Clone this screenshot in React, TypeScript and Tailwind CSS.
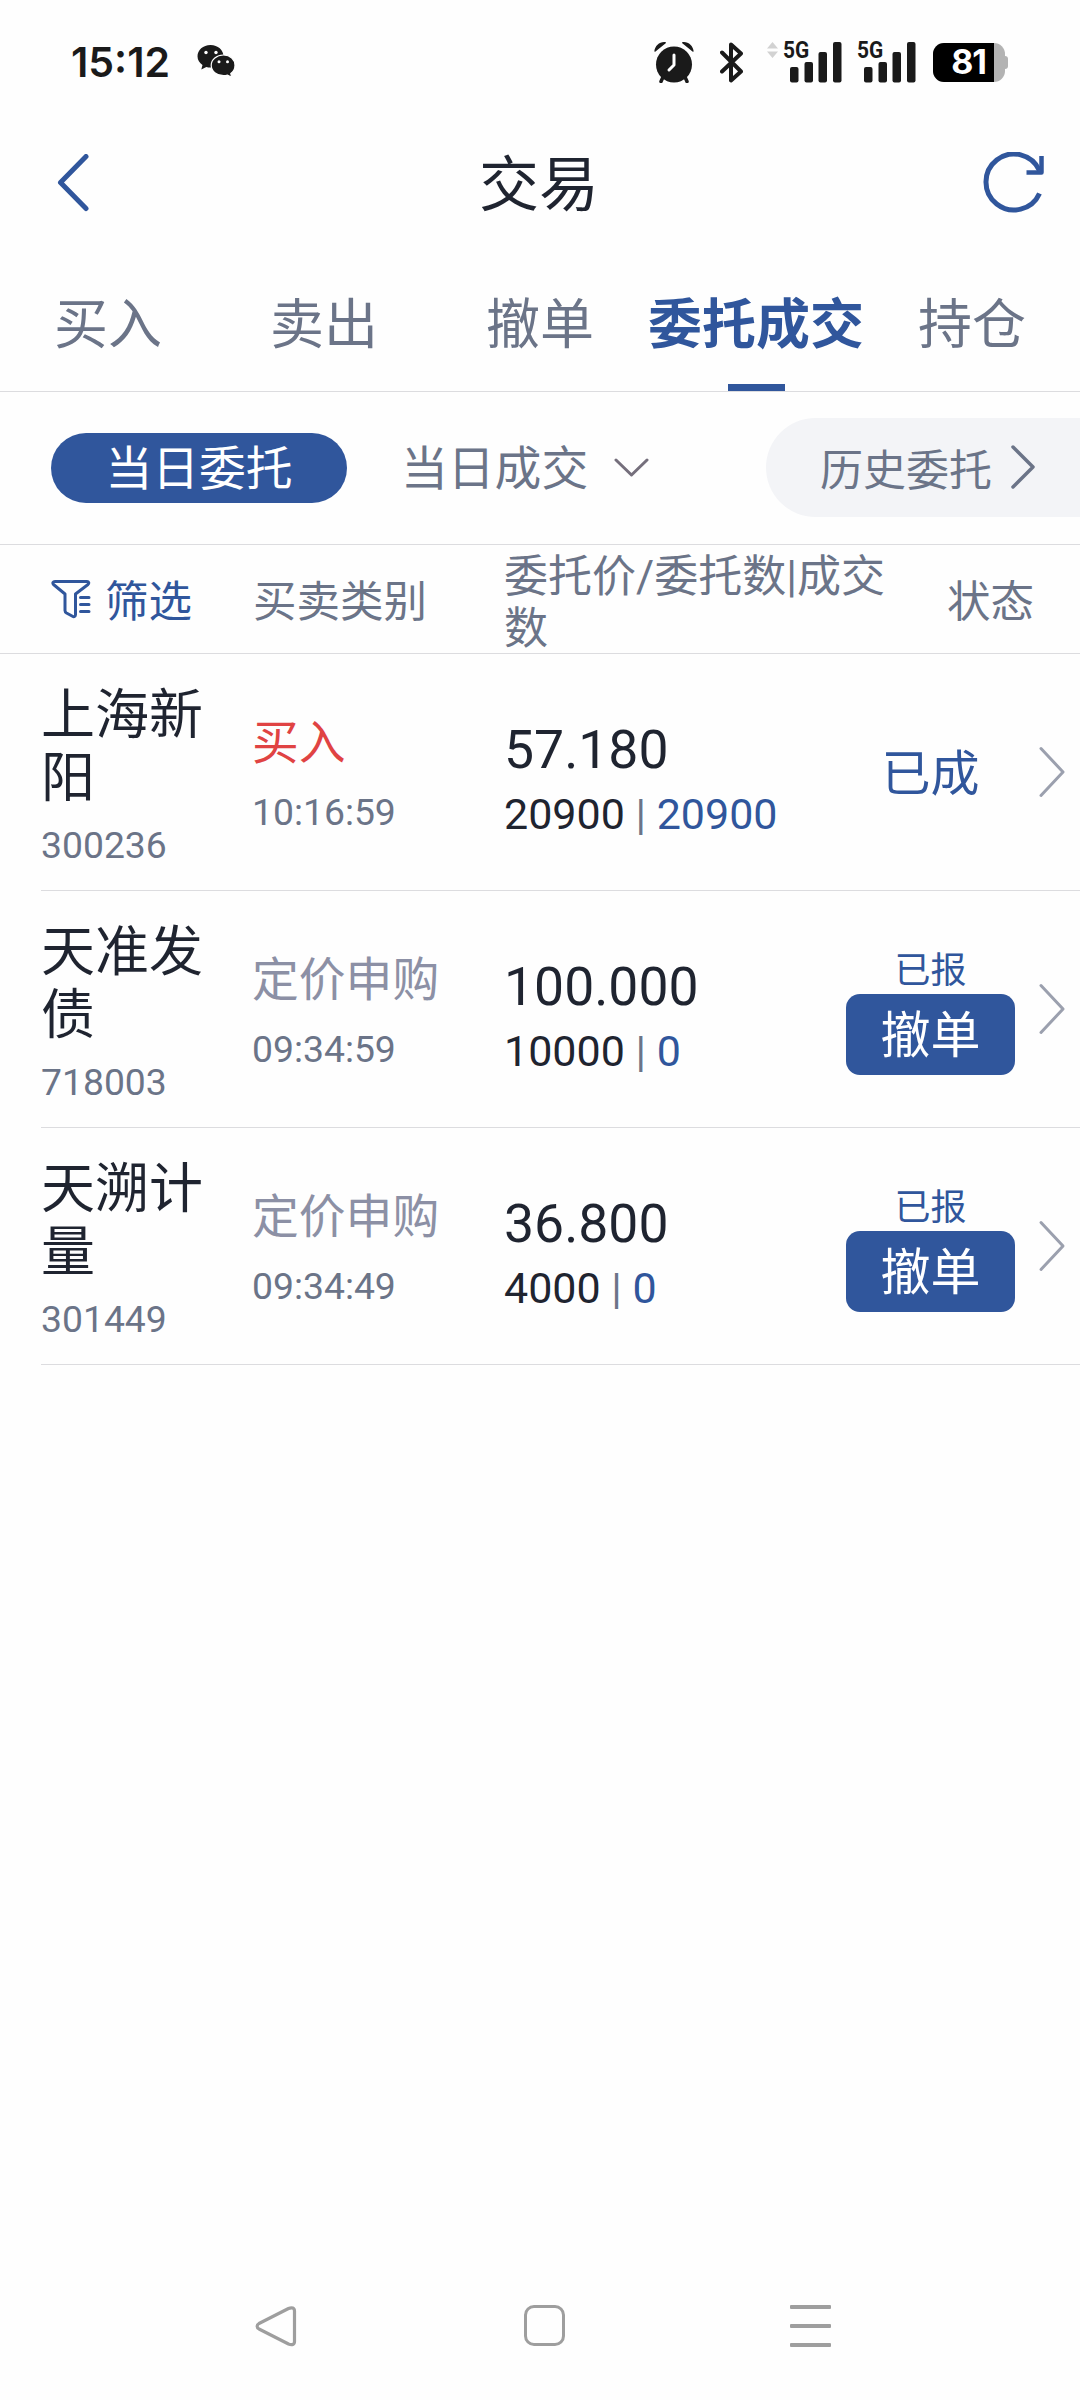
import React, { useState } from 'react';
import clsx from 'clsx';

type Order = {
  name: string;
  code: string;
  side: string;
  isBuy?: boolean;
  time: string;
  price: string;
  qty: string;
  filled: string;
  status: string;
  cancelable?: boolean;
};

const tabs = ['买入', '卖出', '撤单', '委托成交', '持仓'];

const orders: Order[] = [
  { name: '上海新阳', code: '300236', side: '买入', isBuy: true, time: '10:16:59', price: '57.180', qty: '20900', filled: '20900', status: '已成' },
  { name: '天准发债', code: '718003', side: '定价申购', time: '09:34:59', price: '100.000', qty: '10000', filled: '0', status: '已报', cancelable: true },
  { name: '天溯计量', code: '301449', side: '定价申购', time: '09:34:49', price: '36.800', qty: '4000', filled: '0', status: '已报', cancelable: true },
];

const Signal = () => (
  <div className="relative h-[42px] w-[58px]">
    <svg width="58" height="42" viewBox="0 0 58 42" fill="#1a1a1a">
      <rect x="6" y="26" width="8.5" height="15.5" rx="2" />
      <rect x="20.5" y="21" width="8.5" height="20.5" rx="2" />
      <rect x="34.5" y="11" width="8.5" height="30.5" rx="2" />
      <rect x="49" y="1" width="8.5" height="40.5" rx="2" />
    </svg>
    <span className="absolute top-[-5px] left-[-1px] origin-left scale-x-[0.87] text-[24px] leading-[28px] font-bold">5G</span>
  </div>
);

const StatusBar = () => (
  <div className="flex h-[122px] items-center pl-[71px] pr-[72px] text-[#1a1a1a]">
    <span className="mt-[2px] w-[126px] font-['Inter'] text-[41px] leading-[40px] font-semibold">15:12</span>
    <svg width="39" height="34" viewBox="0 0 39 34" fill="#1a1a1a">
      <path d="M13.5 1C6 1 .5 6 .5 12.300c0 3.700 2 6.700 5 8.700L4.300 25.500l5-2.600c1.400.4 2.800.6 4.200.6 7.500 0 13-5 13-11.200S21 1 13.500 1z" />
      <path d="M26.500 11C19.700 11 14.200 15.500 14.200 21.300s5.500 10.400 12.300 10.400c1.500 0 2.800-.2 4-.6l4.200 2.200-.9-3.800c2.700-1.900 4.200-4.800 4.200-8.200C38 15.500 33.300 11 26.500 11z" stroke="#fefefe" strokeWidth="1.200" />
      <circle cx="9" cy="8.500" r="1.700" fill="#fff" />
      <circle cx="19" cy="8.500" r="1.700" fill="#fff" />
      <circle cx="22" cy="17.700" r="1.500" fill="#fff" />
      <circle cx="30.500" cy="17.700" r="1.500" fill="#fff" />
    </svg>
    <div className="ml-auto mt-[2px] flex items-center">
      <svg width="40" height="42" viewBox="0 0 40 42">
        <path d="M0.300 10.500C1 4.500 6 .2 11.800 1.200L12 2 1.200 10.800zM39.700 10.500C39 4.500 34 .2 28.200 1.200L28 2l10.800 8.800z" fill="#1a1a1a" />
        <circle cx="20" cy="23.500" r="18" fill="#1a1a1a" />
        <path d="M9 36l-2 4.500M31 36l2 4.500" stroke="#1a1a1a" strokeWidth="3.500" strokeLinecap="round" />
        <path d="M20 14v10l-5 5" fill="none" stroke="#fff" strokeWidth="3" strokeLinecap="round" strokeLinejoin="round" />
      </svg>
      <svg className="ml-[26px]" width="23" height="41" viewBox="0 0 23 41" fill="none" stroke="#1a1a1a" strokeWidth="4" strokeLinecap="round" strokeLinejoin="round">
        <path d="M2 10.500L21 29.500 11 38.500V2.500L21 11.500 2 29.500" />
      </svg>
      <svg className="ml-[24px] mb-[24px]" width="11" height="16" viewBox="0 0 11 16" fill="#d2d2d2">
        <path d="M5.500 0L11 6.500H0zM0 9.500h11L5.500 16z" />
      </svg>
      <div className="ml-[6px]">
        <Signal />
      </div>
      <div className="ml-[16px]">
        <Signal />
      </div>
      <div className="ml-[17px] flex items-center">
        <div className="flex h-[39px] w-[72px] items-center justify-end overflow-hidden rounded-[11px] bg-[#b3b3b3]">
          <div className="mr-[11px] flex h-full w-full items-center justify-end bg-black pr-[8px] font-['Inter'] text-[34px] leading-[34px] font-bold tracking-[-1px] text-white">81</div>
        </div>
        <div className="h-[13px] w-[3px] rounded-r-[3px] bg-[#b3b3b3]" />
      </div>
    </div>
  </div>
);

const Header = () => (
  <div className="flex h-[121px] items-center justify-between pl-[57px] pr-[34px]">
    <svg width="32" height="58" viewBox="0 0 32 58" fill="none" stroke="#30569c" strokeWidth="5" strokeLinecap="round" strokeLinejoin="round">
      <path d="M29 2.500L3.500 28.500 29 54.500" />
    </svg>
    <h1 className="mt-[6px] ml-[6px] text-[60px] leading-[64px] text-[#1f2430]">交易</h1>
    <svg width="63" height="62" viewBox="0 0 63 62" fill="none" stroke="#30569c" strokeWidth="5">
      <path d="M56.500 41.500A28 28 0 1 1 56.500 18.500" />
      <path d="M58.500 4v16.500H43.500" strokeWidth="4.500" strokeLinejoin="round" />
    </svg>
  </div>
);

const Tabs = () => {
  const [active, setActive] = useState(3);

  return (
    <div className="grid h-[149px] grid-cols-5 border-b border-[#dcdcdf]">
      {tabs.map((tab, i) => (
        <button
          key={tab}
          type="button"
          onClick={() => setActive(i)}
          className={clsx('flex flex-col items-center whitespace-nowrap pt-[51px] text-[54px] leading-[64px]', i === active ? 'font-bold text-[#30569c]' : 'text-[#6b7488]')}
        >
          {tab}
          {i === active && <span className="mt-auto h-[7px] w-[57px] bg-[#30569c]" />}
        </button>
      ))}
    </div>
  );
};

const SubTabs = () => (
  <div className="flex h-[153px] items-center border-b border-[#dcdcdf] pl-[51px] text-[#6b7488]">
    <div className="flex h-[70px] w-[296px] items-center justify-center rounded-full bg-[#30569c] pt-[2px] text-[46.800px] leading-[56px] text-white">当日委托</div>
    <div className="ml-[54px] w-[187px] pt-[1px] text-[46.800px] leading-[56px] whitespace-nowrap">当日成交</div>
    <svg className="ml-[26px]" width="35" height="20" viewBox="0 0 35 20" fill="none" stroke="#756f7c" strokeWidth="3" strokeLinecap="round" strokeLinejoin="round">
      <path d="M2 2l15.500 15L33 2" />
    </svg>
    <div className="mb-[1px] ml-auto flex h-[99px] w-[314px] items-center rounded-l-full bg-[#f3f4f7] pl-[54px]">
      <span className="mt-[6px] text-[43px] leading-[52px]">历史委托</span>
      <svg className="mb-[2px] ml-[18px]" width="26" height="44" viewBox="0 0 26 44" fill="none" stroke="#6b7488" strokeWidth="3.500" strokeLinecap="round" strokeLinejoin="round">
        <path d="M3 2l20 20L3 42" />
      </svg>
    </div>
  </div>
);

const ListHeader = () => (
  <div className="flex h-[109px] items-center border-b border-[#dcdcdf] pl-[51px] pt-[8px] text-[43.500px] leading-[52px] text-[#6b7488]">
    <div className="flex w-[202px] items-center text-[#30569c]">
      <svg className="mr-[14px] mb-[8px]" width="40" height="40" viewBox="0 0 40 40" fill="none" stroke="#30569c" strokeWidth="3" strokeLinecap="round" strokeLinejoin="round">
        <path d="M4 2.500h32c1.800 0 2.300 1.800 1 3L24.500 15v20.500c0 2-1.500 2.700-3 1.800l-6-3.300c-1-.6-1.500-1.300-1.500-2.500V15L2.500 5.500C1.200 4 2 2.500 4 2.500z" />
        <path d="M29.500 18.500H38M29.500 25.500H38M29.500 32.500H38" />
      </svg>
      筛选
    </div>
    <div className="w-[251px]">买卖类别</div>
    <div className="w-[396px] text-[44px]">委托价/委托数|成交数</div>
    <div className="ml-[47px]">状态</div>
  </div>
);

const OrderRow = ({ order }: { order: Order }) => (
  <div className="ml-[41px] flex h-[237px] border-b border-[#dcdcdf]">
    <div className="w-[211px] pt-[30px]">
      <div className="w-[170px] text-[54px] leading-[63px] text-[#1f2430]">{order.name}</div>
      <div className="mt-[13px] text-[37.300px] leading-[44px] text-[#6b7488]">{order.code}</div>
    </div>
    <div className="w-[252px] pt-[61px]">
      <div className={clsx('text-[46.800px] leading-[56px]', order.isBuy ? 'text-[#e04343]' : 'text-[#8c90a5]')}>{order.side}</div>
      <div className="mt-[19px] text-[37.300px] leading-[44px] text-[#6b7488]">{order.time}</div>
    </div>
    <div className="w-[342px] pt-[64px] text-[#1f2430]">
      <div className="text-[53.500px] leading-[64px]">{order.price}</div>
      <div className="mt-[7px] text-[43px] leading-[50px]">
        {order.qty} <span className="text-[#6b7488]">|</span> <span className="text-[#30569c]">{order.filled}</span>
      </div>
    </div>
    <div className="flex w-[169px] flex-col items-center text-[#30569c]">
      {order.cancelable ? (
        <>
          <div className="mt-[58px] text-[36px] leading-[44px]">{order.status}</div>
          <button type="button" className="mt-[1px] h-[81px] w-full rounded-[14px] bg-[#30569c] pt-[4px] text-[50px] leading-[77px] text-white">
            撤单
          </button>
        </>
      ) : (
        <div className="my-auto pt-[5px] text-[49px] leading-[60px]">{order.status}</div>
      )}
    </div>
    <svg className="my-auto ml-[23px]" width="28" height="52" viewBox="0 0 28 52" fill="none" stroke="#9ba0ae" strokeWidth="3" strokeLinecap="round" strokeLinejoin="round">
      <path d="M3 2.500l22 23.500L3 49.500" />
    </svg>
  </div>
);

const NavBar = () => (
  <div className="mt-auto flex h-[149px] items-center justify-between pl-[254px] pr-[249px]">
    <svg width="44" height="44" viewBox="0 0 44 44" fill="none" stroke="#9e9e9e" strokeWidth="3.200" strokeLinejoin="round">
      <path d="M34.500 4.500L5 19.500c-2.500 1.500-2.500 4 0 5.500l29.500 15c3.500 1.500 6 .5 6-2.500V7c0-3-2.500-4-6-2.500z" />
    </svg>
    <div className="h-[41px] w-[41px] rounded-[10px] border-[3.500px] border-[#9e9e9e]" />
    <div className="flex w-[41px] flex-col gap-[15px]">
      <span className="h-[4px] rounded-[1px] bg-[#9e9e9e]" />
      <span className="h-[4px] rounded-[1px] bg-[#9e9e9e]" />
      <span className="h-[4px] rounded-[1px] bg-[#9e9e9e]" />
    </div>
  </div>
);

const App = () => {
  return (
    <div className="flex h-[2400px] w-[1080px] flex-col overflow-hidden bg-[#fefefe] font-['Roboto','Noto_Sans_CJK_SC',sans-serif]">
      <StatusBar />
      <Header />
      <Tabs />
      <SubTabs />
      <ListHeader />
      {orders.map((order) => (
        <OrderRow key={order.code} order={order} />
      ))}
      <NavBar />
    </div>
  );
};

export default App;
